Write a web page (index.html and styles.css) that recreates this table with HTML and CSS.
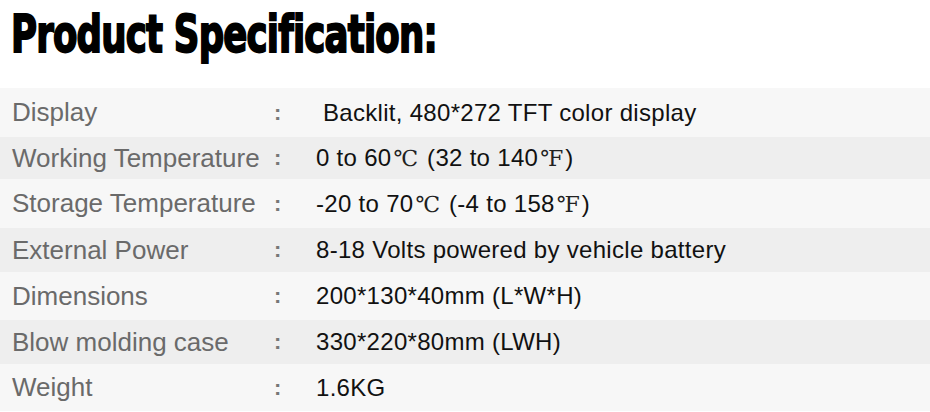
FILE: index.html
```html
<!DOCTYPE html>
<html lang="en">
<head>
<meta charset="utf-8">
<title>Product Specification</title>
<link rel="stylesheet" href="styles.css">
</head>
<body>
<header class="head">
  <h1 class="title">Product Specification:</h1>
</header>
<section class="spec">
  <div class="row"><div class="label">Display</div><div class="colon">:</div><div class="value">&nbsp;Backlit, 480*272 TFT color display</div></div>
  <div class="row"><div class="label">Working Temperature</div><div class="colon">:</div><div class="value">0 to 60<span class="deg">℃</span> (32 to 140<span class="deg">℉</span>)</div></div>
  <div class="row"><div class="label">Storage Temperature</div><div class="colon">:</div><div class="value">-20 to 70<span class="deg">℃</span> (-4 to 158<span class="deg">℉</span>)</div></div>
  <div class="row"><div class="label">External Power</div><div class="colon">:</div><div class="value">8-18 Volts powered by vehicle battery</div></div>
  <div class="row"><div class="label">Dimensions</div><div class="colon">:</div><div class="value">200*130*40mm (L*W*H)</div></div>
  <div class="row"><div class="label">Blow molding case</div><div class="colon">:</div><div class="value">330*220*80mm (LWH)</div></div>
  <div class="row"><div class="label">Weight</div><div class="colon">:</div><div class="value">1.6KG</div></div>
</section>
</body>
</html>
```
FILE: styles.css
```css
html, body {
  margin: 0;
  padding: 0;
  background: #ffffff;
}
body {
  width: 930px;
  font-family: "Liberation Sans", Arial, sans-serif;
}
.head {
  height: 88px;
  display: flex;
  align-items: flex-start;
  padding-left: 11px;
  box-sizing: border-box;
  overflow: hidden;
}
.title {
  margin: 0;
  margin-top: 5px;
  font-family: "DejaVu Sans Condensed", "DejaVu Sans", sans-serif;
  font-weight: bold;
  font-size: 50px;
  line-height: 56px;
  color: #000;
  letter-spacing: -1px;
  -webkit-text-stroke: 1.8px #000;
  transform: scale(0.79, 1.04);
  transform-origin: left top;
  white-space: nowrap;
}
.spec {
  display: flex;
  flex-direction: column;
}
.row {
  display: flex;
  align-items: center;
  background: #f7f7f7;
}
.row:nth-child(even) {
  background: #eeeeee;
}
.row:nth-child(1) { height: 49px; }
.row:nth-child(2) { height: 42px; }
.row:nth-child(3) { height: 49px; }
.row:nth-child(4) { height: 44px; }
.row:nth-child(5) { height: 48px; }
.row:nth-child(6) { height: 44px; }
.row:nth-child(7) { height: 47px; }
.label {
  width: 274px;
  padding-left: 12px;
  box-sizing: border-box;
  font-size: 26px;
  color: #6a6a6a;
  white-space: nowrap;
}
.colon {
  width: 42px;
  font-size: 22px;
  color: #777;
  font-weight: bold;
}
.value {
  font-size: 24px;
  letter-spacing: 0.3px;
  color: #111;
  white-space: nowrap;
}
.deg {
  font-family: "DejaVu Serif", "Liberation Serif", serif;
  font-size: 22px;
  letter-spacing: 0;
  color: #222;
  margin: 0 2px;
}
```
